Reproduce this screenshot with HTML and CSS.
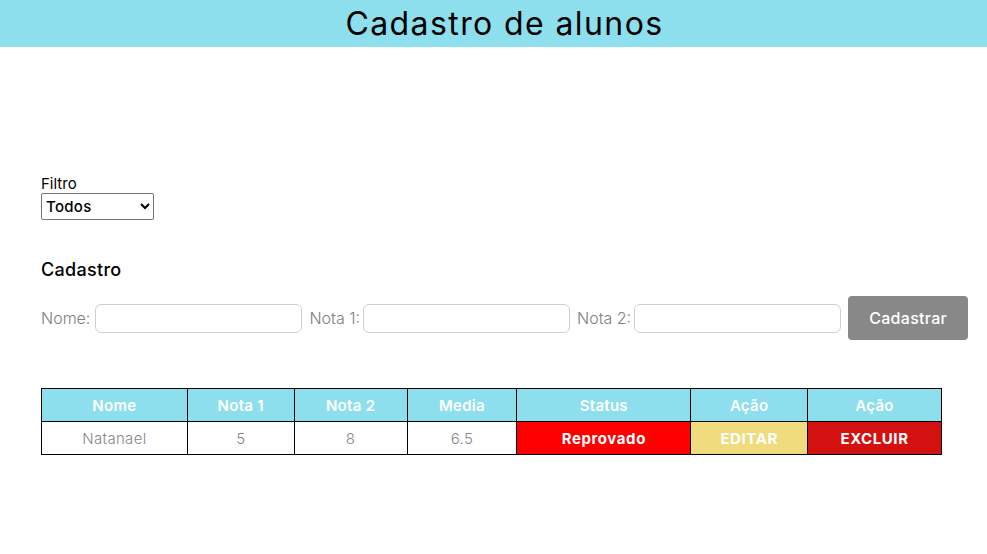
FILE: index.html
```html
<!DOCTYPE html>
<html lang="pt-BR">
<head>
<meta charset="utf-8">
<title>Cadastro de alunos</title>
<link rel="stylesheet" href="styles.css">
</head>
<body>
<header class="topbar">
  <h1 class="title">Cadastro de alunos</h1>
</header>
<main class="content">
  <div class="filter">
    <label class="filter-label" for="filtro">Filtro</label>
    <select id="filtro" class="filter-select">
      <option>Todos</option>
    </select>
  </div>
  <h2 class="section-title">Cadastro</h2>
  <form class="form-row">
    <label class="field-label field-label-first">Nome:</label>
    <input class="field-input" type="text">
    <label class="field-label">Nota 1:</label>
    <input class="field-input" type="text">
    <label class="field-label">Nota 2:</label>
    <input class="field-input" type="text">
    <button class="btn-submit" type="button">Cadastrar</button>
  </form>
  <table class="grid">
    <thead>
      <tr>
        <th class="c-nome">Nome</th>
        <th class="c-n1">Nota 1</th>
        <th class="c-n2">Nota 2</th>
        <th class="c-media">Media</th>
        <th class="c-status">Status</th>
        <th class="c-edit">Ação</th>
        <th class="c-del">Ação</th>
      </tr>
    </thead>
    <tbody>
      <tr>
        <td>Natanael</td>
        <td>5</td>
        <td>8</td>
        <td>6.5</td>
        <td class="status-bad">Reprovado</td>
        <td class="act-edit">EDITAR</td>
        <td class="act-del">EXCLUIR</td>
      </tr>
    </tbody>
  </table>
</main>
</body>
</html>
```
FILE: styles.css
```css
* { box-sizing: border-box; }
body {
  margin: 0;
  font-family: "Inter", "Open Sans", sans-serif;
  color: #000;
  background: #fff;
}
.topbar {
  height: 47px;
  padding-left: 22px;
  background: #8ddfee;
  display: flex;
  align-items: center;
  justify-content: center;
}
.title {
  margin: 0;
  font-size: 32px;
  font-weight: 400;
  letter-spacing: 1.4px;
}
.content {
  padding: 0 41px;
}
.filter {
  margin-top: 128px;
  display: flex;
  flex-direction: column;
  align-items: flex-start;
}
.filter-label {
  font-size: 15px;
  line-height: 18px;
  font-weight: 400;
}
.filter-select {
  width: 113px;
  height: 27px;
  font-family: inherit;
  font-size: 15px;
  font-weight: 500;
  letter-spacing: 0.3px;
  border: 1px solid #767676;
  border-radius: 2px;
  background: #fff;
  color: #000;
}
.section-title {
  margin: 38px 0 0;
  font-size: 18px;
  font-weight: 500;
  line-height: 24px;
  letter-spacing: 0.3px;
}
.form-row {
  margin-top: 14px;
  display: flex;
  align-items: center;
}
.field-label {
  flex-shrink: 0;
  white-space: nowrap;
  font-size: 16px;
  font-weight: 300;
  color: #808080;
  margin-right: 3px;
}
.field-label-first {
  margin-right: 5px;
}
.field-input {
  flex-shrink: 0;
  width: 207px;
  height: 29px;
  border: 1px solid #cfcfcf;
  border-radius: 6px;
  margin-right: 7px;
  font-family: inherit;
}
.btn-submit {
  flex-shrink: 0;
  width: 120px;
  height: 44px;
  border: none;
  border-radius: 4px;
  background: #888;
  color: #fff;
  font-family: inherit;
  font-size: 16px;
  font-weight: 500;
  letter-spacing: 0.3px;
}
.grid {
  margin-top: 48px;
  width: 901px;
  border-collapse: collapse;
  font-size: 15px;
}
.grid th, .grid td {
  border: 1px solid #000;
  height: 33px;
  text-align: center;
  padding: 0;
}
.grid th {
  background: #8ddfee;
  color: #fff;
  font-weight: 600;
  letter-spacing: 0.3px;
}
.grid td {
  color: #888;
  font-weight: 300;
  letter-spacing: 0.3px;
}
.c-nome { width: 146px; }
.c-n1 { width: 107px; }
.c-n2 { width: 113px; }
.c-media { width: 110px; }
.c-status { width: 174px; }
.c-edit { width: 117px; }
.c-del { width: 134px; }
.grid td.status-bad {
  background: #ff0000;
  color: #fff;
  font-weight: 700;
  letter-spacing: 0.6px;
}
.grid td.act-edit {
  background: #f0dc7e;
  color: #fff;
  font-weight: 700;
  letter-spacing: 0.6px;
}
.grid td.act-del {
  background: #d31111;
  color: #fff;
  font-weight: 700;
  letter-spacing: 0.6px;
}
```
